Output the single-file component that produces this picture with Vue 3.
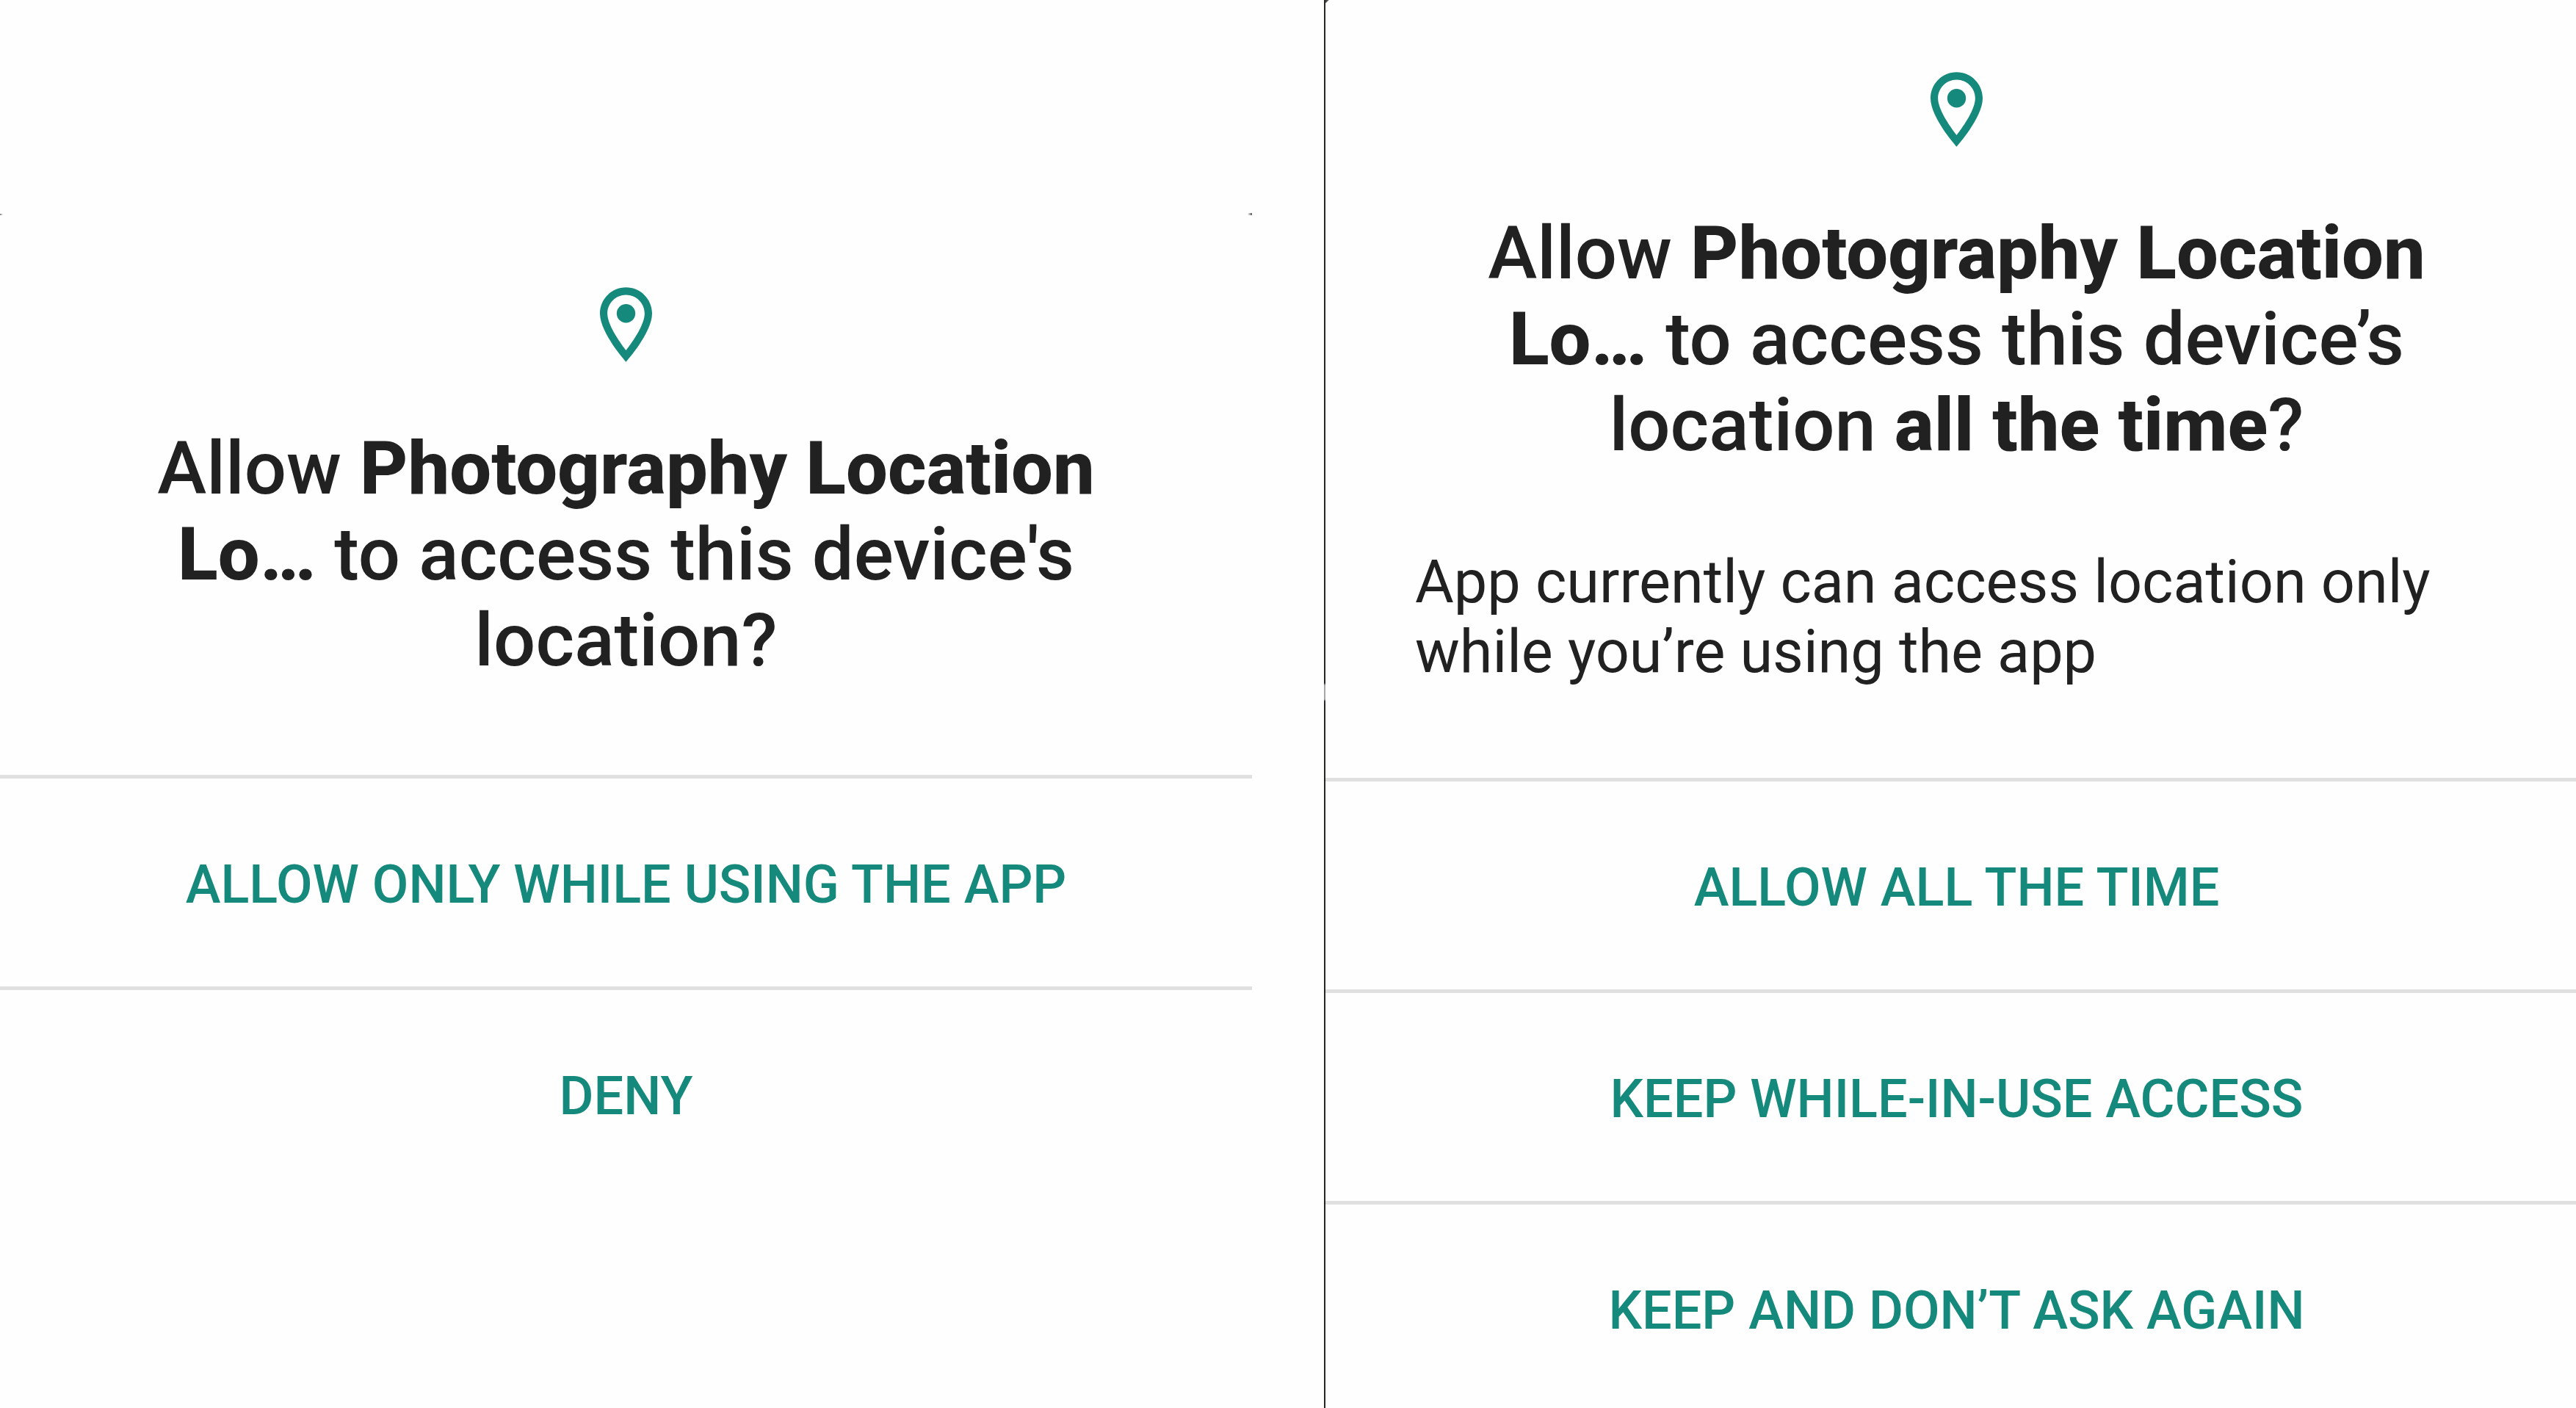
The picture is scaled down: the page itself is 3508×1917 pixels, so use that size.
<script setup>
</script>

<template>
  <main class="screen">
    <section class="dialog first">
      <div class="body">
        <svg class="pin" viewBox="5 2 14 20" aria-hidden="true">
          <path d="M12 2C8.13 2 5 5.13 5 9c0 5.25 7 13 7 13s7-7.75 7-13c0-3.87-3.13-7-7-7zM7 9c0-2.76 2.24-5 5-5s5 2.24 5 5c0 2.88-2.88 7.19-5 9.88C9.92 16.21 7 11.85 7 9z" />
          <circle cx="12" cy="9" r="2.5" />
        </svg>
        <h1>Allow <b>Photography Location<br>Lo…</b> to access this device's<br>location?</h1>
      </div>
      <button type="button">ALLOW ONLY WHILE USING THE APP</button>
      <button type="button">DENY</button>
    </section>
    <section class="dialog second">
      <div class="body">
        <svg class="pin" viewBox="5 2 14 20" aria-hidden="true">
          <path d="M12 2C8.13 2 5 5.13 5 9c0 5.25 7 13 7 13s7-7.75 7-13c0-3.87-3.13-7-7-7zM7 9c0-2.76 2.24-5 5-5s5 2.24 5 5c0 2.88-2.88 7.19-5 9.88C9.92 16.21 7 11.85 7 9z" />
          <circle cx="12" cy="9" r="2.5" />
        </svg>
        <h1>Allow <b>Photography Location<br>Lo…</b> to access this device’s<br>location <b>all the time</b>?</h1>
        <p>App currently can access location only<br>while you’re using the app</p>
      </div>
      <button type="button">ALLOW ALL THE TIME</button>
      <button type="button">KEEP WHILE-IN-USE ACCESS</button>
      <button type="button">KEEP AND DON’T ASK AGAIN</button>
    </section>
  </main>
</template>

<style>
body { background: #fefefe; }
</style>

<style scoped>
.screen {
  display: grid;
  grid-template-columns: 1705fr 1705fr;
  column-gap: 98px;
  min-height: 100vh;
  font-family: Roboto, "Liberation Sans", sans-serif;
  color: #212121;
}
.dialog {
  display: flex;
  flex-direction: column;
  white-space: nowrap;
  background-repeat: no-repeat;
}
/* Dark specks left at the dialog's rounded top corners */
.first {
  padding-top: 293px;
  background-image: linear-gradient(to left, #555, transparent), linear-gradient(to right, #777, transparent);
  background-position: right 290px, 0 291px;
  background-size: 6px 3px, 4px 2px;
}
/* Dark left edge with a short pale break, and a corner speck at its top */
.second {
  padding-left: 2px;
  background-image:
    linear-gradient(#262622 930px, #a8a5a8 933px, #a8a5a8 952px, #262622 955px),
    linear-gradient(135deg, #444 40%, transparent 60%);
  background-position: 0 0, 2px 0;
  background-size: 2px 100%, 5px 4px;
}
.body {
  display: flex;
  flex-direction: column;
  align-items: center;
  padding: 98px 120px 125px;
}
.second .body { padding: 98px 106px 124px 122px; }
.pin { width: 71px; height: 102px; fill: #15897b; }
h1 {
  margin: 86px 0 0;
  font-size: 101px;
  line-height: 117px;
  font-weight: 500;
  text-align: center;
}
h1 b { font-weight: 800; }
p {
  align-self: flex-start;
  margin: 108px 0 0;
  font-size: 81px;
  line-height: 95px;
}
button {
  height: 288px;
  padding: 5px 0 0;
  border: 0;
  border-top: 5px solid #e0e0e0;
  background: transparent;
  color: #15897b;
  font: 500 72px Roboto, "Liberation Sans", sans-serif;
}
.second button { padding-left: 16px; }
</style>
